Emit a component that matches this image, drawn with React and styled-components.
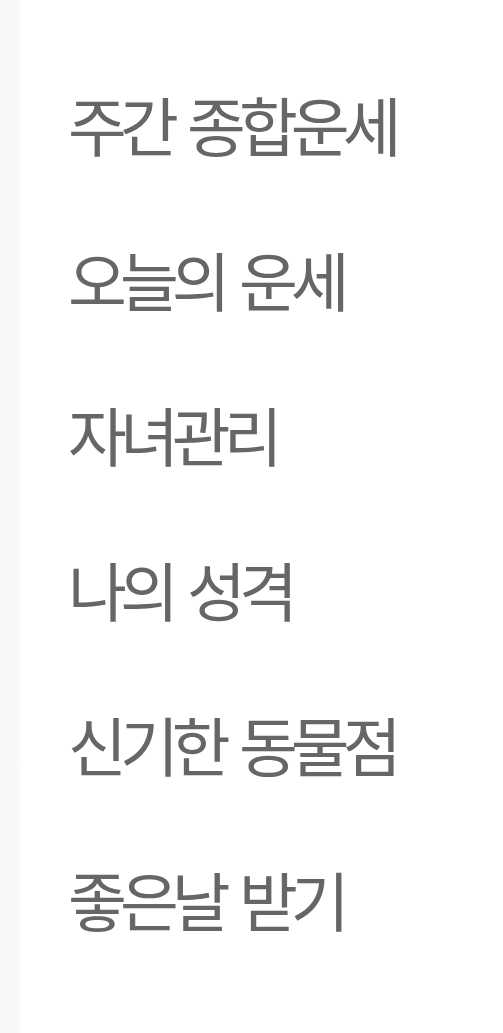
import React from 'react'
import styled, { createGlobalStyle } from 'styled-components'

const GlobalStyle = createGlobalStyle`
  html, body {
    margin: 0;
    padding: 0;
    background: #ffffff;
  }
  body {
    font-family: "Noto Sans CJK KR", "Noto Sans", sans-serif;
  }
`

const menuItems = [
  '주간 종합운세',
  '오늘의 운세',
  '자녀관리',
  '나의 성격',
  '신기한 동물점',
  '좋은날 받기',
]

const App = () => {
  return (
    <>
      <GlobalStyle />
      <Page>
        <SideEdge />
        <MenuList>
          {menuItems.map((title) => (
            <MenuItem key={title}>{title}</MenuItem>
          ))}
        </MenuList>
      </Page>
    </>
  )
}

const Page = styled.div`
  display: flex;
  width: 503px;
  height: 1033px;
  overflow: hidden;
  background: #ffffff;
`
// 왼쪽 가장자리 옅은 그림자
const SideEdge = styled.div`
  width: 22px;
  flex-shrink: 0;
  background: linear-gradient(to right, #f8f8f8 0%, #f8f8f8 70%, #ffffff 100%);
`
const MenuList = styled.ul`
  list-style: none;
  margin: 0;
  padding: 46px 0 0 46px;
  display: flex;
  flex-direction: column;
`
const MenuItem = styled.li`
  height: 155px;
  line-height: 155px;
  font-size: 64px;
  font-weight: 400;
  letter-spacing: -7px;
  word-spacing: 8px;
  color: #666666;
  white-space: nowrap;
  cursor: pointer;
`

export default App
